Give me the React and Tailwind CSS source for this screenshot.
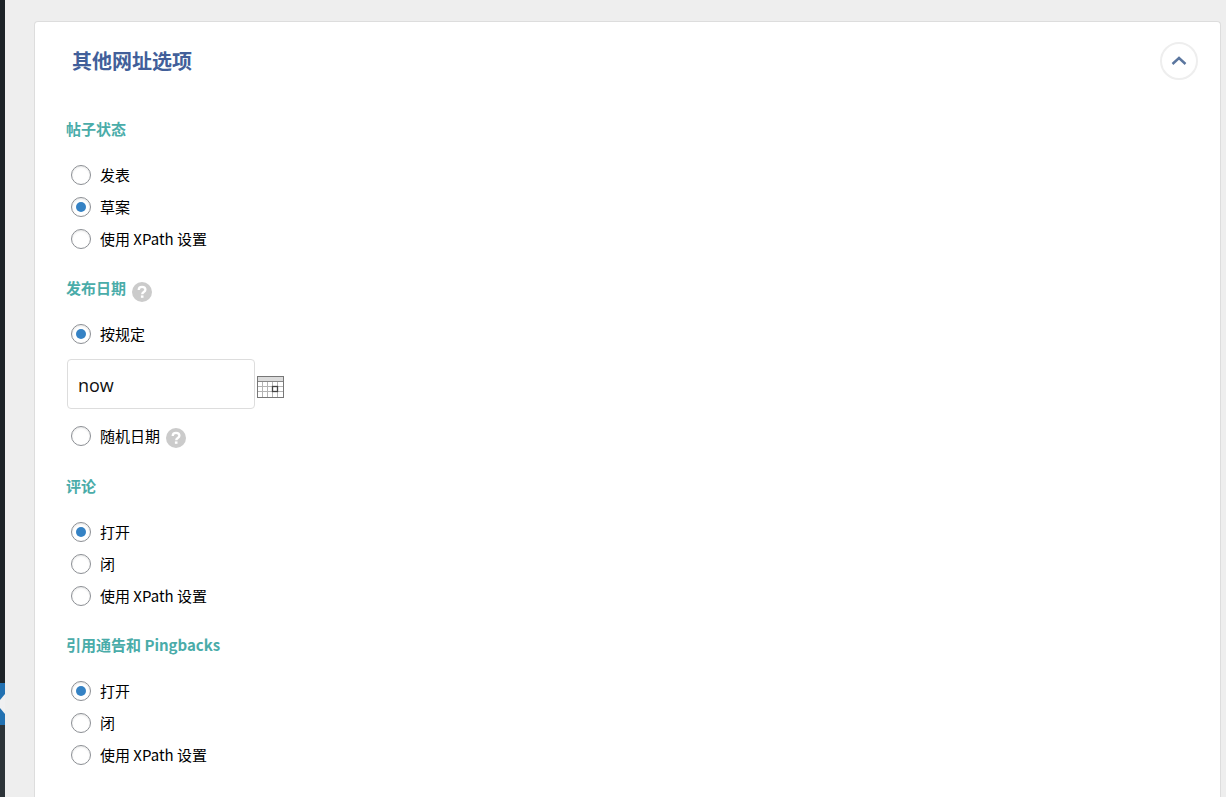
const STATUS = ["发表", "草案", "使用 XPath 设置"];
const OPEN_CLOSED = ["打开", "闭", "使用 XPath 设置"];

function Help({ label }) {
  return (
    <a href="#help" aria-label={label} className="mt-1 ml-1.5 block">
      <svg width="20" height="20" viewBox="0 0 20 20" aria-hidden="true">
        <circle cx="10" cy="10" r="10" fill="#cbcbcb" />
        <path
          d="M6.7 8.1C6.7 6 8.1 4.9 10 4.9s3.4 1 3.4 2.8c0 2.3-3.2 2.2-3.2 4.5"
          fill="none"
          stroke="#fff"
          strokeWidth="2.3"
        />
        <rect x="8.9" y="13.4" width="2.6" height="2.4" fill="#fff" />
      </svg>
    </a>
  );
}

function Option({ name, label, checked, children }) {
  return (
    <div className="flex h-8 items-center pl-[5px]">
      <label className="flex items-center gap-[9px] text-[15px] leading-5 text-black">
        <input
          type="radio"
          name={name}
          defaultChecked={checked}
          className="grid size-5 shrink-0 appearance-none place-items-center rounded-full border border-[#8c8f94] bg-white shadow-[inset_0_1px_2px_rgba(0,0,0,0.1)] before:size-2.5 before:rounded-full before:content-[''] checked:before:bg-[#3582c4]"
        />
        {label}
      </label>
      {children}
    </div>
  );
}

function Heading({ children }) {
  return (
    <div className="mb-5 flex h-5 items-start text-[15px] leading-5 font-bold text-[#4aaca9]">
      {children}
    </div>
  );
}

function RadioSection({ title, name, options, selected }) {
  return (
    <section>
      <Heading>
        <h3>{title}</h3>
      </Heading>
      {options.map((label, i) => (
        <Option key={label} name={name} label={label} checked={i === selected} />
      ))}
    </section>
  );
}

function CalendarIcon() {
  return (
    <svg width="27" height="22" viewBox="0 0 27 22" aria-hidden="true">
      <rect x="0.5" y="0.5" width="26" height="21" fill="#fff" stroke="#777" />
      <rect x="1" y="1" width="25" height="4" fill="#dcdcdc" />
      <path d="M1 5.5h25" stroke="#888" />
      <path d="M1 10.5h25M1 15.5h25M5.5 6v15M10.5 6v15M15.5 6v15M20.5 6v15" stroke="#b4b4b4" />
      <rect x="15.5" y="10.5" width="5" height="5" fill="#fff" stroke="#444" strokeWidth="1.3" />
    </svg>
  );
}

export default function App() {
  return (
    <div className="flex min-h-screen bg-[#eeeeee] font-['Noto_Sans_CJK_SC',sans-serif]">
      <aside className="flex w-[5px] shrink-0 flex-col bg-[#1d2327]">
        <div className="h-[683px]" />
        <svg width="5" height="42" viewBox="0 0 5 42" className="shrink-0" aria-hidden="true">
          <rect width="5" height="42" fill="#2271b1" />
          <path d="M5 11L0 17v8l5 6z" fill="#f0f0f1" />
        </svg>
        <div className="flex-1 bg-[#2c3338]" />
      </aside>

      <main className="flex flex-1 flex-col pt-[21px] pr-[5px] pl-[29px]">
        <div className="flex-1 rounded-t border border-b-0 border-[#dddddd] bg-white">
          <header className="flex items-center justify-between pt-5 pr-[22px] pl-[37px]">
            <h2 className="text-xl leading-7 font-bold text-[#425f9a]">其他网址选项</h2>
            <button
              type="button"
              aria-label="收起"
              className="grid size-[38px] place-items-center rounded-full border-2 border-[#eeeeee] text-[#5b769f]"
            >
              <svg width="16" height="10" viewBox="0 0 16 10" aria-hidden="true">
                <path d="M1.500 8L8 2l6.500 6" fill="none" stroke="currentColor" strokeWidth="2.4" />
              </svg>
            </button>
          </header>

          <form className="flex flex-col gap-[23px] px-[31px] pt-[39px]">
            <RadioSection title="帖子状态" name="status" options={STATUS} selected={1} />

            <section className="pb-px">
              <Heading>
                <h3>发布日期</h3>
                <Help label="发布日期帮助" />
              </Heading>
              <Option name="date" label="按规定" checked />
              <div className="mt-[9px] mb-[11px] flex items-center gap-0.5 pl-px">
                <input
                  type="text"
                  aria-label="日期"
                  defaultValue="now"
                  className="h-[50px] w-[188px] rounded border border-[#dddddd] bg-white px-2.5 pt-0.5 font-['Open_Sans',sans-serif] text-lg text-[#111111]"
                />
                <button type="button" aria-label="选择日期" className="pt-1.5">
                  <CalendarIcon />
                </button>
              </div>
              <Option name="date" label="随机日期">
                <Help label="随机日期帮助" />
              </Option>
            </section>

            <RadioSection title="评论" name="comments" options={OPEN_CLOSED} selected={0} />
            <RadioSection title="引用通告和 Pingbacks" name="pings" options={OPEN_CLOSED} selected={0} />
          </form>
        </div>
      </main>
    </div>
  );
}
